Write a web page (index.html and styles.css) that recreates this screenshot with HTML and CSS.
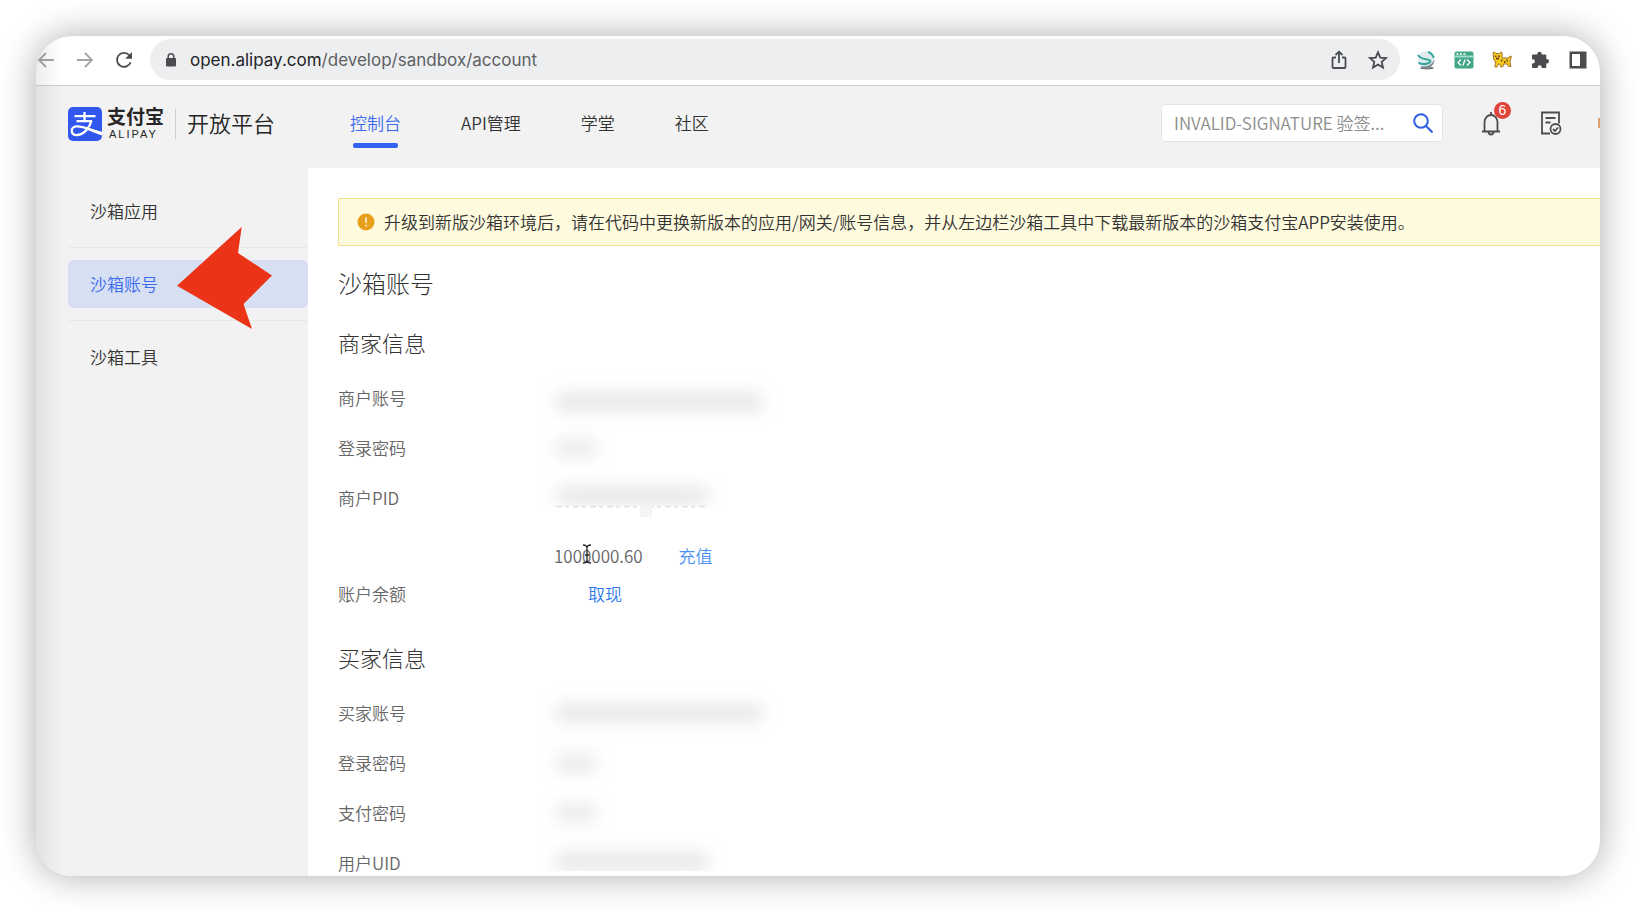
FILE: index.html
```html
<!DOCTYPE html>
<html lang="zh-CN">
<head>
<meta charset="utf-8">
<title>沙箱账号</title>
<link rel="stylesheet" href="styles.css">
</head>
<body>
<div class="window">
  <div class="toolbar">
    <div class="toolbar-nav">
      <button class="icon-btn muted" aria-label="后退"><svg viewBox="0 0 20 20"><path d="M18 10H3M10 3l-7 7 7 7"/></svg></button>
      <button class="icon-btn muted" aria-label="前进"><svg viewBox="0 0 20 20"><path d="M2 10h15M10 3l7 7-7 7"/></svg></button>
      <button class="icon-btn" aria-label="刷新"><svg viewBox="0 0 20 20"><path d="M16.600 12.200A7 7 0 1 1 15.200 5.200L17 7"/><path class="solid" d="M18 2v6.800h-6.800z"/></svg></button>
    </div>
    <div class="address">
      <svg class="lock" viewBox="0 0 12 14"><rect x="1" y="5" width="10" height="8.500" rx="1" fill="#4a4c50"/><path d="M3.200 6V3.600a2.800 2.800 0 0 1 5.600 0V6" fill="none" stroke="#4a4c50" stroke-width="1.500"/></svg>
      <span class="url"><span class="host">open.alipay.com</span>/develop/sandbox/account</span>
      <button class="icon-btn" aria-label="分享"><svg viewBox="0 0 20 20"><path d="M7 7.500H4.500a1 1 0 0 0-1 1V17a1 1 0 0 0 1 1h11a1 1 0 0 0 1-1V8.500a1 1 0 0 0-1-1H13M10 13V2M6.500 5L10 1.700 13.500 5"/></svg></button>
      <button class="icon-btn" aria-label="收藏"><svg viewBox="0 0 20 20"><path d="M10 2.300l2.300 5.300 5.700.5-4.300 3.800 1.300 5.700-5-3-5 3 1.300-5.700L2 8.100l5.700-.5z"/></svg></button>
    </div>
    <div class="extensions">
      <button class="icon-btn" aria-label="扩展一"><svg viewBox="0 0 20 20" class="art"><ellipse cx="11" cy="18" rx="7" ry="1.500" fill="#777"/><circle cx="10" cy="9.500" r="8.500" fill="#e3eaeb"/><path d="M4.500 16a8.500 8.500 0 0 0 14-6.500C16 15 10 17.500 4.500 16z" fill="#7d8a8e"/><path d="M2 5c2 3 5 4 9 4.500 4 .5 4.500 2.500 1 3.800-3 1.200-6 1-9.500-.3" fill="none" stroke="#35a79f" stroke-width="2.200"/><path d="M12 2c3 1 5 3 5.800 6" fill="none" stroke="#35a79f" stroke-width="2"/></svg></button>
      <button class="icon-btn" aria-label="扩展二"><svg viewBox="0 0 20 20" class="art"><rect x="0.500" y="1.500" width="19" height="17" rx="2" fill="#43a688"/><path d="M1 6.500h18" stroke="#a5dbc9"/><path d="M2.500 4h2M6 4h2M9.500 4h2" stroke="#fff" stroke-width="1.400"/><path d="M7 9.500l-3 3 3 3M13 9.500l3 3-3 3M11 9.500l-2 6" fill="none" stroke="#fff" stroke-width="1.300"/></svg></button>
      <button class="icon-btn" aria-label="扩展三"><svg viewBox="0 0 20 20" class="art"><path d="M1 2.500l1.500-.5L4 3.500h3.500L9 2l1 .5V8h6l1.500-.5L18 6l1.500.5-1 3-.5 3 1 4h-2.500l-1-2.500h-4l-.5 2.800H8.500L8 14H6.500L5 17H3l.5-5L1.500 9z" fill="#f3cc21" stroke="#a8742a" stroke-width="1"/><path d="M3.500 5.500V7M7 5.500V7M4 8.500h3M9 10.500h1.500M12 12h1.500M14.500 10.500H16" stroke="#7a4a18" fill="none"/></svg></button>
      <button class="icon-btn" aria-label="扩展程序"><svg viewBox="0 0 20 20"><path class="solid" d="M7.300 4a2.200 2.200 0 0 1 4.400 0v.5h3.600a1 1 0 0 1 1 1V9h.5a2.200 2.200 0 0 1 0 4.400h-.5V17a1 1 0 0 1-1 1h-3.600v-.8a2 2 0 0 0-4 0v.8H3a1 1 0 0 1-1-1v-3.500h.8a2 2 0 0 0 0-4.200H2V5.500a1 1 0 0 1 1-1h4.300z"/></svg></button>
      <button class="icon-btn" aria-label="侧边栏"><svg viewBox="0 0 20 20"><path class="solid" fill-rule="evenodd" d="M1.500 1.500h17v17h-17zM4 4v12h8V4z"/></svg></button>
    </div>
  </div>

  <header class="header">
    <a class="brand" href="#" aria-label="支付宝开放平台">
      <svg class="brand-mark" viewBox="0 0 34 34"><rect width="34" height="34" rx="5" fill="#3157ee"/><g fill="none" stroke="#fff" stroke-width="2.300"><path d="M6.500 9.200h21M16.500 5v9M8.500 14.200h15.500"/><path d="M23.500 13.800C21.500 21 16 27.500 9.500 28 2.500 28.500 1.800 20.500 8 19.400c6.500-1 14.500 4 26 6.800"/></g><path d="M19 20.600c5 2 10 3.500 15 4.400v3.400c-5.500-1.400-11-4-16.500-6.300z" fill="#fff"/></svg>
      <span class="brand-words"><span class="brand-cn">支付宝</span><span class="brand-en">ALIPAY</span></span>
      <span class="brand-sub">开放平台</span>
    </a>
    <nav class="nav">
      <a class="current" href="#">控制台</a>
      <a href="#">API管理</a>
      <a href="#">学堂</a>
      <a href="#">社区</a>
    </nav>
    <form class="search">
      <input type="text" aria-label="搜索" placeholder="INVALID-SIGNATURE 验签...">
      <button type="button" class="search-btn" aria-label="搜索"><svg viewBox="0 0 20 20"><circle cx="8" cy="8" r="6.800"/><path d="M13 13l6.500 6.500"/></svg></button>
    </form>
    <button class="head-btn" aria-label="消息"><svg viewBox="0 0 24 26"><path d="M3 21.500h18M5.500 21.500V12a6.500 7 0 0 1 13 0v9.500M12 5V2M9.500 22a2.500 2.500 0 0 0 5 0"/></svg><span class="badge">6</span></button>
    <button class="head-btn" aria-label="工单"><svg viewBox="0 0 24 26"><path d="M11 23.500H3v-21h17v11M6.500 8h10M6.500 12.500h5"/><circle cx="16.500" cy="19" r="5"/><path d="M14 19l2 2 3-3.500"/></svg></button>
    <span class="avatar"></span>
  </header>

  <div class="body">
    <aside class="sidebar">
      <a class="side-item" href="#">沙箱应用</a>
      <a class="side-item active" href="#">沙箱账号
        <svg class="pointer" viewBox="0 0 96 102"><path d="M0 58.700L64.700 0 61 26l34 22.500L66.500 77 75 102z" fill="#eb3317"/></svg>
      </a>
      <a class="side-item" href="#">沙箱工具</a>
    </aside>

    <main class="main">
      <div class="alert" role="alert">
        <svg viewBox="0 0 18 18"><circle cx="9" cy="9" r="8.500" fill="#e8a01c"/><path d="M9 4.500v5.500M9 11.800v1.600" stroke="#fff" stroke-width="1.400"/></svg>
        <span>升级到新版沙箱环境后，请在代码中更换新版本的应用/网关/账号信息，并从左边栏沙箱工具中下载最新版本的沙箱支付宝APP安装使用。</span>
      </div>
      <h1>沙箱账号</h1>

      <h2>商家信息</h2>
      <dl class="info">
        <div class="row"><dt>商户账号</dt><dd><span class="masked long low"></span></dd></div>
        <div class="row"><dt>登录密码</dt><dd><span class="masked short"></span></dd></div>
        <div class="row"><dt>商户PID</dt><dd><span class="mask-clip"><span class="masked medium"></span></span><svg class="mask-edge" viewBox="0 0 160 12"><path d="M2 .8h84M94 .8h58" stroke="#d2d2d2" stroke-dasharray="6 3 4 4"/><path d="M86 0h12v11H86z" fill="#f5f5f5"/></svg></dd></div>
        <div class="row balance"><dt>账户余额</dt><dd>1000000.60<a href="#" class="light">充值</a> <a href="#">取现</a><svg class="caret" viewBox="0 0 10 20"><path d="M1 1q4 0 4 3v12q0 3-4 3M9 1q-4 0-4 3v12q0 3 4 3M3 11h4"/></svg></dd></div>
      </dl>

      <h2>买家信息</h2>
      <dl class="info">
        <div class="row"><dt>买家账号</dt><dd><span class="masked long"></span></dd></div>
        <div class="row"><dt>登录密码</dt><dd><span class="masked short"></span></dd></div>
        <div class="row"><dt>支付密码</dt><dd><span class="masked short"></span></dd></div>
        <div class="row"><dt>用户UID</dt><dd><span class="mask-clip"><span class="masked medium"></span></span></dd></div>
      </dl>
    </main>
  </div>
</div>
</body>
</html>
```

FILE: styles.css
```css
* { box-sizing: border-box; }

body {
  margin: 0;
  padding: 36px;
  height: 100vh;
  background: #fff;
  color: #333;
  font: 350 17px/24px "Noto Sans CJK SC", "Liberation Sans", sans-serif;
  overflow: hidden;
}

a { color: inherit; text-decoration: none; }
button { border: 0; padding: 0; background: none; }

.window {
  position: relative;
  display: flex;
  flex-direction: column;
  height: 100%;
  border-radius: 36px;
  overflow: hidden;
  background: #fff;
  box-shadow: 0 0 36px rgba(0, 0, 0, 0.33);
}

.window::after {
  content: "";
  position: absolute;
  inset: 0 auto 0 0;
  width: 26px;
  background: linear-gradient(90deg, rgba(0, 0, 0, 0.07), rgba(0, 0, 0, 0));
  pointer-events: none;
}

/* Browser toolbar */
.toolbar {
  flex: none;
  display: flex;
  align-items: center;
  gap: 16px;
  height: 50px;
  padding: 0 12px 2px 0;
  border-bottom: 1px solid #cfd1d3;
}

.toolbar-nav { display: flex; gap: 19px; }
.extensions { display: flex; gap: 18px; }

.icon-btn { width: 20px; height: 20px; color: #4a4c50; }
.icon-btn svg {
  display: block;
  width: 20px;
  height: 20px;
  fill: none;
  stroke: currentColor;
  stroke-width: 1.8;
}
.icon-btn svg.art { stroke: none; }
.icon-btn .solid { fill: currentColor; stroke: none; }
.icon-btn.muted { color: #a3a5a7; }

.address {
  flex: 1;
  display: flex;
  align-items: center;
  height: 41px;
  padding: 0 12px 0 15px;
  gap: 19px;
  border-radius: 21px;
  background: #edeef0;
}
.lock { width: 12px; height: 14px; }
.url {
  flex: 1;
  margin-left: -6px;
  font-family: Inter, Roboto, sans-serif;
  font-weight: 400;
  color: #5d5f63;
}
.host { color: #222426; }

/* Site header */
.header {
  flex: none;
  display: flex;
  align-items: center;
  height: 82px;
  padding: 0 0 8px 32px;
  background: #f2f2f2;
}

.brand { display: flex; align-items: center; margin-top: 2px; color: #262626; }
.brand-mark { width: 34px; height: 34px; }
.brand-words { display: flex; flex-direction: column; margin-left: 5px; }
.brand-cn {
  font-family: "Liberation Sans", "Noto Sans CJK SC", sans-serif;
  font-size: 19px;
  line-height: 21px;
  font-weight: 700;
}
.brand-en {
  padding-left: 2px;
  font-family: "Liberation Sans", sans-serif;
  font-size: 11px;
  line-height: 13px;
  font-weight: 400;
  letter-spacing: 2px;
}
.brand-sub {
  margin-left: 11px;
  padding: 0 0 4px 11px;
  border-left: 1px solid #cfcfcf;
  font-size: 22px;
  line-height: 26px;
}

.nav { display: flex; gap: 60px; margin-left: 75px; }
.nav a { position: relative; }
.nav .current { color: #3b6cf0; }
.nav .current::after {
  content: "";
  position: absolute;
  left: 3px;
  right: 3px;
  bottom: -13px;
  height: 5px;
  border-radius: 2px;
  background: #3560f0;
}

.search {
  display: flex;
  align-items: center;
  width: 282px;
  height: 38px;
  margin-left: auto;
  padding: 0 9px 0 12px;
  border: 1px solid #e4e4e4;
  border-radius: 4px;
  background: #fff;
}
.search input {
  flex: 1;
  min-width: 0;
  border: 0;
  padding: 0;
  outline: 0;
  font: inherit;
  background: none;
}
.search input::placeholder { color: #8c8c8c; opacity: 1; }
.search-btn svg {
  display: block;
  width: 20px;
  height: 20px;
  fill: none;
  stroke: #2f5fe6;
  stroke-width: 2;
}

.head-btn { position: relative; width: 24px; height: 26px; margin-left: 36px; }
.head-btn svg {
  display: block;
  width: 24px;
  height: 26px;
  fill: none;
  stroke: #4d4d4d;
  stroke-width: 1.8;
}
.badge {
  position: absolute;
  top: -8px;
  left: 15px;
  width: 17px;
  height: 17px;
  border-radius: 50%;
  background: #df4339;
  color: #fff;
  font: 14px/17px "Liberation Sans", sans-serif;
  text-align: center;
}
.avatar { width: 2px; height: 10px; margin-left: 35px; background: #e2a06c; }

/* Page body */
.body { flex: 1; display: flex; min-height: 0; }

.sidebar {
  flex: none;
  width: 272px;
  padding: 19px 0 0 32px;
  background: #f2f2f2;
}
.side-item {
  position: relative;
  display: block;
  padding: 12px 22px;
  border-radius: 5px;
}
.side-item + .side-item { margin-top: 25px; }
.side-item + .side-item::before {
  content: "";
  position: absolute;
  left: 0;
  right: 0;
  top: -13px;
  height: 1px;
  background: #e8e8e8;
}
.side-item.active { z-index: 1; background: #d7dff2; color: #3b6cf0; }
.pointer {
  position: absolute;
  left: 109px;
  top: -33px;
  width: 96px;
  height: 102px;
}

.main { flex: 1; min-width: 0; padding: 30px 0 0 30px; overflow: hidden; }

.alert {
  display: flex;
  align-items: center;
  gap: 9px;
  height: 48px;
  padding-left: 18px;
  border: 1px solid #f5e08c;
  border-right: 0;
  border-radius: 2px 0 0 2px;
  background: #fefadd;
  white-space: nowrap;
}
.alert svg { flex: none; width: 18px; height: 18px; }

h1, h2 { margin: 0; font-weight: 300; }
h1 { margin-top: 19px; font-size: 24px; line-height: 36px; }
h2 { margin-top: 25px; font-size: 22px; line-height: 32px; }

.info { margin: 15px 0 0; color: #666; }
.info + h2 { margin-top: 28px; }
.row { display: flex; align-items: center; height: 50px; }
.row dt { width: 216px; }
.row dd { position: relative; margin: 0; }

.row.balance { align-items: flex-end; height: 90px; line-height: 38px; }
.balance dd { width: 180px; }
.balance a { display: inline-block; margin-left: 34px; color: #2f7af0; }
.balance a.light { margin-left: 36px; color: #4a90f0; }
.caret {
  position: absolute;
  left: 28px;
  top: 7px;
  width: 10px;
  height: 20px;
  fill: none;
  stroke: #222;
  stroke-width: 1.3;
}

.masked {
  display: block;
  height: 20px;
  border-radius: 10px;
  background: #e9e9e9;
  filter: blur(8px);
}
.masked.long { width: 210px; }
.masked.low { margin-top: 8px; }
.masked.medium { width: 156px; }
.masked.short { width: 44px; background: #ececec; }
.mask-clip {
  display: block;
  height: 34px;
  margin: -18px 0 0 -20px;
  padding: 14px 20px 0;
  overflow: hidden;
}
.mask-edge { position: absolute; left: 0; bottom: -12px; width: 160px; height: 12px; }
```
